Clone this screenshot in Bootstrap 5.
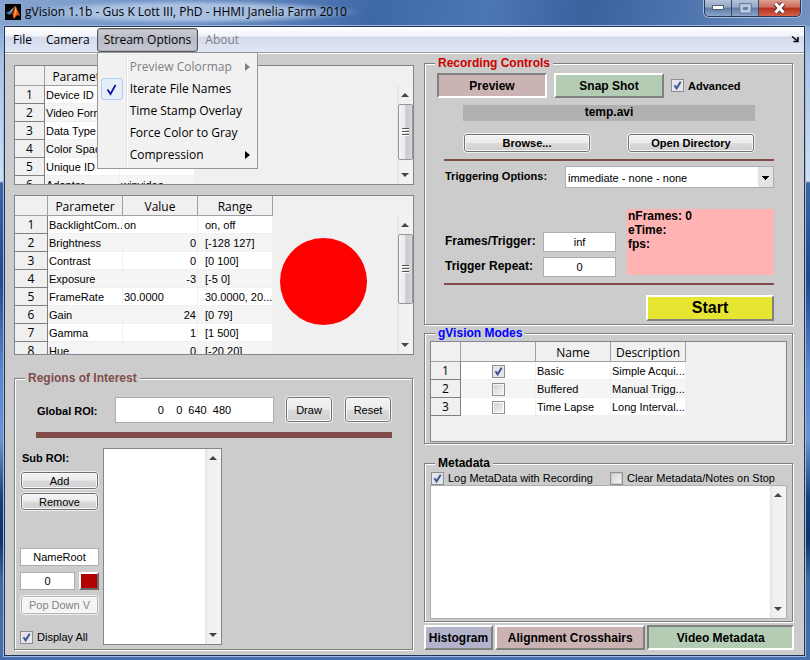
<!DOCTYPE html>
<html lang="en">
<head>
<meta charset="utf-8">
<meta name="viewport" content="width=device-width, initial-scale=1">
<title>gVision 1.1b</title>
<link rel="stylesheet" href="https://cdn.jsdelivr.net/npm/bootstrap@5.3.0/dist/css/bootstrap.min.css">
<style>
  :root { --face: #ccc; --ui: "Open Sans", "Noto Sans", sans-serif; --plain: "Liberation Sans", Arial, sans-serif; --maroon: #804d4a; }
  body { font: 11px/14px var(--plain); color: #000; background: linear-gradient(#7094c8 0, #a9c3e6 60px, #d0def2 181px, #3e66a6 183px, #23488c 280px, #5a86cc 370px, #6a93d4 440px, #173d7c 500px, #0f3270 540px, #4069a6 580px, #456fb0); }
  button, input, select, textarea { font: inherit; color: inherit; }
  .titlebar { height: 26px; background: linear-gradient(100deg, #86a4cf 0, #6d92c6 25%, #3f68a8 46%, #4d76b4 60%, #3b629f 72%, #4d74ae 84%, #7392c2 100%); font: 12px/24px var(--ui); }
  .title-glow { background: radial-gradient(closest-side, rgba(190,208,234,.75) 60%, rgba(190,208,234,0)); }
  .winbtns { height: 17px; margin-right: 9px; border: 1px solid #26395c; border-top: 0; border-radius: 0 0 5px 5px; overflow: hidden; box-shadow: 0 0 0 1px #a8bddb; }
  .winbtns button { border: 0; border-right: 1px solid #34486c; padding: 0; width: 27px; line-height: 0; background: linear-gradient(#b4c3d9 0, #93a8c6 45%, #5f7ba5 50%, #8ba5cb); }
  .winbtns .close-win { width: 41px; border-right: 0; background: linear-gradient(#dc9f92 0, #cc6c59 45%, #b3301a 50%, #d4614a); }
  .frame { margin: 0 5px 4px 4px; border: 1px solid #1f3558; box-shadow: 0 0 0 1px #9fb8dc; background: var(--face); }
  .menubar { height: 27px; padding-left: 1px; border-bottom: 1px solid #fff; box-shadow: inset 0 -1px #999; background: linear-gradient(#fff 0, #f0f3fa 9px, #d3daed 10px, #e2e7f5 25px); font: 12px/22px var(--ui); }
  .menubar > div > button { display: block; margin-top: 1px; border: 1px solid transparent; background: none; padding: 0 6px; height: 24px; border-radius: 3px; }
  .menubar > div > button.opened { border-color: #55585f; background: linear-gradient(#cdced3, #b9bbc4 45%, #c5c7d4); box-shadow: inset 0 0 0 1px #aeb0b8; }
  .menubar button:disabled { color: #808080; }
  .drop { position: absolute; left: 0; top: 25px; z-index: 5; width: 161px; padding: 3px 0 2px; background: #f1f1f1; border: 1px solid #979797; }
  .drop button { display: flex; align-items: center; width: 100%; height: 22px; padding: 0 7px 0 3px; border: 0; background: none; text-align: left; white-space: nowrap; }
  .drop .tick { width: 22px; height: 22px; margin-right: 7px; flex: none; display: flex; align-items: center; justify-content: center; border: 1px solid transparent; border-radius: 3px; }
  .drop .tick.on { border-color: #aecff7; background: #e6eff8; }
  .drop::before { content: ""; position: absolute; left: 28px; top: 2px; bottom: 2px; width: 2px; border-left: 1px solid #e2e3e3; border-right: 1px solid #fff; }
  .work { padding: 9px 10px 5px 9px; gap: 10px; }
  .col-l { flex: 400 1 0; padding-top: 2px; min-width: 0; }
  .col-r { flex: 370 1 0; min-width: 0; }
  .etched { border: 1px solid #808080; box-shadow: 1px 1px 0 #fff, inset 1px 1px 0 #fff; margin-right: 1px; }
  .etched > h2 { position: relative; font: bold 12px/14px var(--plain); margin: -8px auto 0 10px; padding: 0 3px; background: var(--face); width: fit-content; }
  .c-red { color: #c00; } .c-blue { color: #00f; } .c-maroon { color: var(--maroon); }
  .strong { font-weight: bold; }
  .strong12 { font-weight: bold; font-size: 12px; }
  .sheet { position: relative; background: #f0f0f0; border: 1px solid #82868f; overflow: hidden; }
  .sheet table { table-layout: fixed; border-collapse: separate; border-spacing: 0; width: 0; }
  .sheet th { background: #f0f0f0; border-right: 1px solid #a0a0a0; border-bottom: 1px solid #a0a0a0; font: 12px/17px var(--ui); text-align: center; padding: 0; }
  .sheet thead th { height: 20px; padding-top: 2px; white-space: nowrap; }
  .sheet tbody th { border-color: #808080; }
  .sheet td { height: 18px; padding: 1px 0 0 1px; background: #fff; border-right: 1px solid #f0f0f0; border-bottom: 1px solid #f0f0f0; white-space: nowrap; overflow: hidden; line-height: 16px; }
  .sheet td.text-end { padding-right: 1px; }
  .sheet tr:nth-child(even) td { background: #f5f5f5; }
  .sheet td.rng { padding-left: 7px; }
  .w30 { width: 30px; } .w33 { width: 33px; } .w75 { width: 75px; }
  .h120 { height: 120px; } .h160 { height: 160px; margin-top: 10px; } .h101 { height: 101px; margin: 1px 5px; }
  .live { position: absolute; left: 265px; top: 42px; width: 87px; height: 87px; border-radius: 50%; background: #f00; }
  .sbar { width: 16px; flex: none; background: linear-gradient(90deg, #e3e3e3, #f0f0f0 3px, #f3f3f3); display: flex; flex-direction: column; align-items: center; }
  .sheet .sbar { position: absolute; right: 0; top: 20px; bottom: 0; }
  .sbar i { width: 16px; height: 18px; display: flex; align-items: center; justify-content: center; }
  .sbar i::before { content: ""; border: 4px solid transparent; border-top: 0; border-bottom: 4px solid #444; }
  .sbar i.down::before { border-bottom: 0; border-top: 4px solid #444; }
  .thumb { width: 15px; border: 1px solid #979797; border-radius: 2px; background: linear-gradient(90deg, #f5f5f5, #e9e9eb 45%, #c6c8cd 55%, #d9dade); display: flex; align-items: center; justify-content: center; }
  .thumb::before { content: ""; width: 7px; height: 8px; background: repeating-linear-gradient(#555 0 1px, #fff 1px 2px, transparent 2px 3px); }
  .t56 { height: 56px; } .t70 { height: 70px; }
  .raised, .sunk { border: 2px solid; border-color: #fff #808080 #808080 #fff; height: 25px; padding: 0; font-weight: bold; font-size: 12px; white-space: nowrap; }
  .sunk { border-color: #808080 #fff #fff #808080; }
  .rose { background: #ccb3b3; } .mint { background: #b3ccb3; } .lilac { background: #b3b3cc; } .sun { background: #e6e632; }
  .win7 { border: 1px solid #707070; border-radius: 3px; outline: 1px solid #f0f0f0; margin: 1px; padding: 0; background: linear-gradient(#f3f3f3 0, #ebebeb 48%, #dadada 52%, #cfcfcf); box-shadow: inset 0 0 0 1px #fafafa; height: 18px; line-height: 16px; }
  .win7.short { height: 17px; }
  .win7.tall { height: 25px; width: 46px; flex: none; }
  .win7:disabled { color: #838383; border-color: #adb2b5; background: #f4f4f4; }
  .field { border: 1px solid #abadb3; background: #fff; text-align: center; padding: 0; min-width: 0; border-radius: 0; }
  .h20 { height: 20px; } .h18 { height: 18px; } .h26 { height: 26px; }
  input[type=checkbox] { appearance: none; flex: none; width: 13px; height: 13px; margin: 0; border: 1px solid #8e8f8f; background: linear-gradient(135deg, #cfd2d6, #f4f4f4) content-box #f4f4f4; padding: 1px; }
  input[type=checkbox]:checked { background: url("data:image/svg+xml,%3Csvg xmlns='http://www.w3.org/2000/svg' viewBox='0 0 11 11'%3E%3Cpath d='M2.500 5.200 4.600 8.400 8.700 1.800' fill='none' stroke='%233f5699' stroke-width='2'/%3E%3C/svg%3E") center/11px border-box no-repeat #e4e6ea; }
  .sheet input[type=checkbox] { display: block; margin: 0 auto; }
  .tickrow { display: flex; align-items: center; gap: 4px; white-space: nowrap; }
  .rule { height: 2px; background: var(--maroon); margin: 6px 18px 0 19px; }
  .rule.fat { height: 6px; margin: 9px 20px 0 21px; }
  .modebar { margin: 3px 12px 0; gap: 7px; }
  .modebar button { flex: 0 0 110px; }
  .fname { background: #b0b0b0; height: 16px; margin: 7px 37px 0 38px; text-align: center; }
  .filebar { margin: 12px 37px 0 38px; gap: 36px; }
  .filebar button { flex: 1; }
  .trigbar { margin: 5px 18px 0 20px; }
  .trigbar label { width: 120px; line-height: 20px; }
  select.trig { appearance: none; flex: 1; min-width: 0; height: 22px; border: 1px solid #abadb3; border-radius: 0; padding: 2px 18px 0 2px; background: url("data:image/svg+xml,%3Csvg xmlns='http://www.w3.org/2000/svg' width='15' height='20'%3E%3Cpath d='M0 0h15v20H0z' fill='%23e3e3e3'/%3E%3Cpath d='M4 9h7v1H10v1H9v1H8v1H7v-1H6v-1H5v-1H4z'/%3E%3C/svg%3E") right center no-repeat #fff; }
  .stats { margin: 21px 18px 0 20px; gap: 11px; }
  .counts { display: grid; grid-template-columns: 98px 73px; row-gap: 5px; padding-top: 23px; }
  .counts label { line-height: 18px; }
  .pink { background: #ffb3b3; height: 66px; padding-left: 1px; flex: 1; }
  .start { width: 128px; height: 26px; font-size: 16px; line-height: 22px; margin: 10px 18px 3px auto; display: block; }
  .gap8 { margin-top: 8px; } .gap19 { margin-top: 19px; } .gap23 { margin-top: 23px; }
  .roi-top { margin: 11px 20px 0 22px; gap: 12px; }
  .roi-top label { width: 66px; flex: none; padding-top: 2px; }
  .roi-low { margin-top: 10px; padding: 0 0 4px 5px; gap: 4px; }
  .side { width: 79px; padding: 3px 0 1px; }
  .side .strong { margin: 0 0 6px 2px; }
  .side .short { margin-bottom: 3px; }
  .side .root { margin-top: 35px; }
  .side .idx { margin: 6px 0 5px; gap: 4px; }
  .swatch { width: 20px; height: 18px; flex: none; padding: 0; border: 2px solid; border-color: #fff #696969 #696969 #fff; background: #b30000; }
  .roi-list { width: 119px; border: 1px solid #82868f; background: #fff; }
  .metaopts { margin: 1px 6px 0; }
  .metaopts label:first-child { width: 179px; }
  .notes { border: 1px solid #abadb3; background: #fff; margin: 0 5px 2px; }
  .notes textarea { border: 0; resize: none; outline: 0; padding: 2px; background: transparent; min-width: 0; overflow: hidden; }
  .views { margin-top: 3px; gap: 2px; }
  .views button { flex: 147 1 0; } .views .lilac { flex-grow: 67; } .views .rose { flex-grow: 151; }
</style>
<script src="https://cdn.jsdelivr.net/npm/bootstrap@5.3.0/dist/js/bootstrap.bundle.min.js"></script>
</head>
<body class="d-flex flex-column min-vh-100">
<header class="titlebar d-flex align-items-start">
  <svg class="mt-1 ms-1 flex-shrink-0" width="17" height="16" viewBox="0 0 17 16" aria-hidden="true"><path fill="#050505" d="M1 0h16v16H1z"/><path fill="#3d86c6" d="m2 9 4-2 3-2-3 6z"/><path fill="#5fc1cf" d="m6 7 5-5-4 8z"/><path fill="#8f1d12" d="M6 10 9 6l2.500-4 1 5-2 6-2-3z"/><path fill="#e8561c" d="M11.500 1.500 13 5l3 7-2.500-1-4 4-1-4.500 1.500-2z"/><path fill="#f7b64a" d="m11.500 2 1 6-2.500 6 .5-5z"/></svg>
  <div class="title-glow ps-1 pe-3">gVision 1.1b - Gus K Lott III, PhD - HHMI Janelia Farm 2010</div>
  <div class="winbtns d-flex ms-auto">
    <button type="button" aria-label="Minimize"><svg width="14" height="8"><path fill="#fff" stroke="#4c5a74" d="M1.500 1.500h11v4h-11z"/></svg></button>
    <button type="button" aria-label="Maximize" disabled><svg width="13" height="11"><path fill="none" stroke="#b9c9e0" stroke-width="3" d="M3 3h7v5H3z"/><path fill="none" stroke="#6b82a8" d="M.5.5h12v10H.5zM4.500 4.500h4v2h-4z"/></svg></button>
    <button type="button" aria-label="Close" class="close-win"><svg width="13" height="12"><path stroke="#5d3030" stroke-width="5" d="m2.500 1.500 8 9m0-9-8 9"/><path stroke="#fff" stroke-width="3" d="m2.500 1.500 8 9m0-9-8 9"/></svg></button>
  </div>
</header>

<div class="frame flex-grow-1 d-flex flex-column">
  <nav class="menubar d-flex" aria-label="Main menu">
    <div><button type="button">File</button></div>
    <div><button type="button">Camera</button></div>
    <div class="position-relative"><button type="button" class="opened" aria-expanded="true">Stream Options</button>
      <div class="drop">
        <button type="button" disabled><span class="tick"></span>Preview Colormap<svg class="ms-auto" width="5" height="8"><path fill="#808080" d="m0 0 5 4-5 4z"/></svg></button>
        <button type="button"><span class="tick on"><svg width="12" height="13"><path d="m1.500 6.500 3 4.500L9.500 2" fill="none" stroke="#12129c" stroke-width="1.800"/></svg></span>Iterate File Names</button>
        <button type="button"><span class="tick"></span>Time Stamp Overlay</button>
        <button type="button"><span class="tick"></span>Force Color to Gray</button>
        <button type="button"><span class="tick"></span>Compression<svg class="ms-auto" width="5" height="8"><path d="m0 0 5 4-5 4z"/></svg></button>
      </div>
    </div>
    <div><button type="button" disabled>About</button></div>
    <svg class="ms-auto me-1 mt-2" width="9" height="9" aria-hidden="true"><path fill="none" stroke="#000" stroke-width="1.500" d="m1 1.500 5 4M7 2v4.500H2.500"/></svg>
  </nav>

  <main class="work flex-grow-1 d-flex">
    <div class="col-l d-flex flex-column">
      <div class="sheet h120">
        <table>
          <colgroup><col class="w30"><col class="w75"><col class="w75"></colgroup>
          <thead><tr><th></th><th>Parameter</th><th></th></tr></thead>
          <tbody>
            <tr><th>1</th><td>Device ID</td><td></td></tr>
            <tr><th>2</th><td>Video Format</td><td></td></tr>
            <tr><th>3</th><td>Data Type</td><td></td></tr>
            <tr><th>4</th><td>Color Space</td><td></td></tr>
            <tr><th>5</th><td>Unique ID</td><td></td></tr>
            <tr><th>6</th><td>Adaptor</td><td>winvideo</td></tr>
          </tbody>
        </table>
        <div class="sbar"><i></i><div class="thumb t56"></div><i class="down mt-auto"></i></div>
      </div>
      <div class="sheet h160">
        <table>
          <colgroup><col class="w33"><col class="w75"><col class="w75"><col class="w75"></colgroup>
          <thead><tr><th></th><th>Parameter</th><th>Value</th><th>Range</th></tr></thead>
          <tbody>
            <tr><th>1</th><td>BacklightCom...</td><td>on</td><td class="rng">on, off</td></tr>
            <tr><th>2</th><td>Brightness</td><td class="text-end">0</td><td class="rng">[-128 127]</td></tr>
            <tr><th>3</th><td>Contrast</td><td class="text-end">0</td><td class="rng">[0 100]</td></tr>
            <tr><th>4</th><td>Exposure</td><td class="text-end">-3</td><td class="rng">[-5 0]</td></tr>
            <tr><th>5</th><td>FrameRate</td><td>30.0000</td><td class="rng">30.0000, 20...</td></tr>
            <tr><th>6</th><td>Gain</td><td class="text-end">24</td><td class="rng">[0 79]</td></tr>
            <tr><th>7</th><td>Gamma</td><td class="text-end">1</td><td class="rng">[1 500]</td></tr>
            <tr><th>8</th><td>Hue</td><td class="text-end">0</td><td class="rng">[-20 20]</td></tr>
          </tbody>
        </table>
        <div class="live"></div>
        <div class="sbar"><i></i><div class="thumb t70"></div><i class="down mt-auto"></i></div>
      </div>

      <section class="etched gap23 flex-grow-1 d-flex flex-column">
        <h2 class="c-maroon">Regions of Interest</h2>
        <div class="roi-top d-flex align-items-center">
          <label class="strong" for="groi">Global ROI:</label>
          <input id="groi" class="field h26 flex-grow-1" size="8" value="0    0  640  480">
          <button type="button" class="win7 tall mx-0">Draw</button>
          <button type="button" class="win7 tall">Reset</button>
        </div>
        <div class="rule fat"></div>
        <div class="roi-low d-flex flex-grow-1">
          <div class="side d-flex flex-column">
            <div class="strong">Sub ROI:</div>
            <button type="button" class="win7 short">Add</button>
            <button type="button" class="win7 short">Remove</button>
            <input class="field h18 root" aria-label="Name root" value="NameRoot">
            <div class="idx d-flex"><input class="field h18 w-100" aria-label="Index" value="0"><button type="button" class="swatch" aria-label="Color"></button></div>
            <button type="button" class="win7" disabled>Pop Down V</button>
            <label class="tickrow mt-auto"><input type="checkbox" checked>Display All</label>
          </div>
          <div class="roi-list d-flex"><div class="sbar ms-auto"><i></i><i class="down mt-auto"></i></div></div>
        </div>
      </section>
    </div>

    <div class="col-r d-flex flex-column">
      <section class="etched">
        <h2 class="c-red">Recording Controls</h2>
        <div class="modebar d-flex">
          <button type="button" class="sunk rose" aria-pressed="true">Preview</button>
          <button type="button" class="raised mint">Snap Shot</button>
          <label class="tickrow strong"><input type="checkbox" checked>Advanced</label>
        </div>
        <div class="fname strong12">temp.avi</div>
        <div class="filebar d-flex">
          <button type="button" class="win7 strong">Browse...</button>
          <button type="button" class="win7 strong">Open Directory</button>
        </div>
        <div class="rule"></div>
        <div class="trigbar d-flex">
          <label class="strong" for="trig">Triggering Options:</label>
          <select id="trig" class="trig"><option>immediate - none - none</option></select>
        </div>
        <div class="stats d-flex">
          <div class="counts">
            <label class="strong12" for="fpt">Frames/Trigger:</label><input id="fpt" class="field h20" value="inf">
            <label class="strong12" for="rep">Trigger Repeat:</label><input id="rep" class="field h20" value="0">
          </div>
          <div class="pink strong12">nFrames: 0<br>eTime:<br>fps:</div>
        </div>
        <div class="rule"></div>
        <button type="button" class="raised sun start">Start</button>
      </section>

      <section class="etched gap8">
        <h2 class="c-blue">gVision Modes</h2>
        <div class="sheet h101">
          <table>
            <colgroup><col class="w30"><col class="w75"><col class="w75"><col class="w75"></colgroup>
            <thead><tr><th></th><th></th><th>Name</th><th>Description</th></tr></thead>
            <tbody>
              <tr><th>1</th><td><input type="checkbox" aria-label="Basic" checked></td><td>Basic</td><td>Simple Acqui...</td></tr>
              <tr><th>2</th><td><input type="checkbox" aria-label="Buffered"></td><td>Buffered</td><td>Manual Trigg...</td></tr>
              <tr><th>3</th><td><input type="checkbox" aria-label="Time Lapse"></td><td>Time Lapse</td><td>Long Interval...</td></tr>
            </tbody>
          </table>
        </div>
      </section>

      <section class="etched gap19 flex-grow-1 d-flex flex-column">
        <h2>Metadata</h2>
        <div class="metaopts d-flex">
          <label class="tickrow"><input type="checkbox" checked>Log MetaData with Recording</label>
          <label class="tickrow"><input type="checkbox">Clear Metadata/Notes on Stop</label>
        </div>
        <div class="notes d-flex flex-grow-1">
          <textarea class="flex-grow-1" rows="2" aria-label="Metadata notes"></textarea>
          <div class="sbar"><i></i><i class="down mt-auto"></i></div>
        </div>
      </section>
      <div class="views d-flex">
        <button type="button" class="raised lilac">Histogram</button>
        <button type="button" class="raised rose">Alignment Crosshairs</button>
        <button type="button" class="sunk mint" aria-pressed="true">Video Metadata</button>
      </div>
    </div>
  </main>
</div>
</body>
</html>
